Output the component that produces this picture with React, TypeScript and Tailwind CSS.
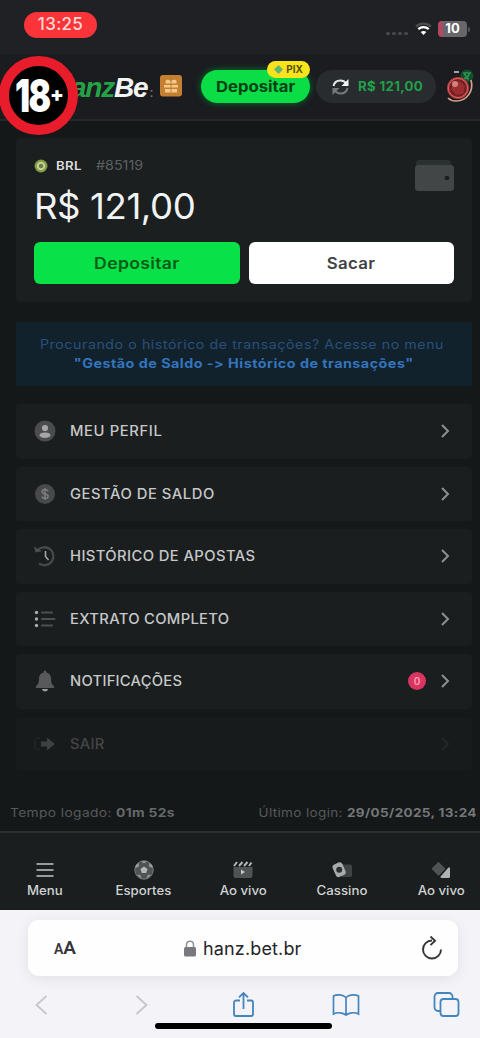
import type { ReactNode } from "react";
import { clsx } from "clsx";

interface MenuItem {
  label: string;
  icon: ReactNode;
  badge?: number;
  faded?: boolean;
  tracking: string;
}

const MENU_ITEMS: MenuItem[] = [
  { label: "MEU PERFIL", icon: <ProfileIcon />, tracking: "tracking-[0.58px]" },
  { label: "GESTÃO DE SALDO", icon: <CoinIcon />, tracking: "tracking-[0.5px]" },
  { label: "HISTÓRICO DE APOSTAS", icon: <HistoryIcon />, tracking: "tracking-[0.38px]" },
  { label: "EXTRATO COMPLETO", icon: <ListIcon />, tracking: "tracking-[0.3px]" },
  { label: "NOTIFICAÇÕES", icon: <BellIcon />, badge: 0, tracking: "tracking-[0.22px]" },
  { label: "SAIR", icon: <ExitIcon />, faded: true, tracking: "tracking-[0.25px]" },
];

const NAV_ITEMS = [
  { label: "Menu", icon: <HamburgerIcon /> },
  { label: "Esportes", icon: <BallIcon /> },
  { label: "Ao vivo", icon: <ClapperIcon /> },
  { label: "Cassino", icon: <CardsIcon /> },
  { label: "Ao vivo", icon: <DiceIcon /> },
];

function ProfileIcon() {
  return (
    <svg width="22" height="22" viewBox="0 0 22 22">
      <circle cx="11" cy="11" r="10.5" fill="#4b4c4e" />
      <circle cx="11" cy="8" r="3.1" fill="#a5a6a7" />
      <path d="M5.5 16c0-2.4 2-3.4 5.5-3.4s5.500 1 5.500 3.400c-1.500 1.300-3.300 1.900-5.500 1.900s-4-.6-5.500-1.900z" fill="#a5a6a7" />
    </svg>
  );
}

function CoinIcon() {
  return (
    <svg width="22" height="22" viewBox="0 0 22 22">
      <circle cx="11" cy="11" r="10" fill="#48494b" />
      <path
        d="M14 8.200c-.4-1.100-1.500-1.600-3-1.600-1.700 0-2.900.8-2.900 2.100 0 3 6 1.400 6 4.500 0 1.400-1.300 2.200-3.100 2.200-1.600 0-2.800-.7-3.200-1.800M11 5v12"
        fill="none"
        stroke="#7d7e7f"
        strokeWidth="1.500"
      />
    </svg>
  );
}

function HistoryIcon() {
  return (
    <svg width="22" height="22" viewBox="0 0 22 22" fill="none">
      <path d="M3.500 5.500A9 9 0 1 1 5 18.400" stroke="#47494b" strokeWidth="2.300" />
      <path d="M0 1.500l1.500 6 6.300-1.200z" fill="#4c4e4f" />
      <path d="M11.500 6v5.500l3 3.500" stroke="#a3a4a5" strokeWidth="1.600" />
    </svg>
  );
}

function ListIcon() {
  return (
    <svg width="22" height="22" viewBox="0 0 22 22" strokeLinecap="round">
      <g fill="#aaabac">
        <circle cx="2.500" cy="4.500" r="1.700" />
        <circle cx="2.500" cy="11" r="1.700" />
        <circle cx="2.500" cy="17.500" r="1.700" />
      </g>
      <path d="M8 4.500h10M8 11h12.500M8 17.500h10" stroke="#4d4f50" strokeWidth="2.200" />
    </svg>
  );
}

function BellIcon() {
  return (
    <svg width="22" height="22" viewBox="0 0 22 22">
      <path
        d="M11 .5c.8 0 1.300.6 1.300 1.400v.6c3 .6 4.700 3 4.700 6 0 4.500 1.200 6 3 7.700.6.700.2 1.800-.8 1.800H2.800c-1 0-1.400-1.100-.8-1.800C3.800 14.500 5 13 5 8.500c0-3 1.700-5.400 4.700-6v-.6C9.700 1.100 10.200.5 11 .5z"
        fill="#58595b"
      />
      <path d="M8 19h6c-.2 1.500-1.400 2.400-3 2.400S8.200 20.500 8 19z" fill="#9b9c9d" />
    </svg>
  );
}

function ExitIcon() {
  return (
    <svg width="22" height="22" viewBox="0 0 22 22">
      <path d="M6 5H3.500C2 5 1 6 1 7.500v6.500C1 15.500 2 16.500 3.500 16.500H6" fill="none" stroke="#202324" strokeWidth="2" />
      <path d="M7 8.500h6V4.500l8 6.500-8 6.500v-4H7z" fill="#3e4041" />
    </svg>
  );
}

function HamburgerIcon() {
  return (
    <svg width="18" height="20" viewBox="0 0 18 20" stroke="#c3c5c5" strokeWidth="1.700">
      <path d="M.5 4h17M.5 10h17M.5 16h17" />
    </svg>
  );
}

function BallIcon() {
  return (
    <svg width="20" height="20" viewBox="0 0 20 20">
      <circle cx="10" cy="10" r="9.200" fill="#505354" stroke="#777a7b" strokeWidth="1" />
      <path d="M10 6.500l3.500 2.500-1.300 4H7.800l-1.300-4z" fill="#b5b7b7" />
      <path
        d="M7 1.300h6L10 3.600zM1 8l1-3 3-2-.3 3.800zM19 8l-1-3-3-2 .3 3.800zM2.700 14.800l3.600.2 1.400 3.700zM17.300 14.800l-3.600.2-1.400 3.700z"
        fill="#9a9c9d"
      />
    </svg>
  );
}

function ClapperIcon() {
  return (
    <svg width="20" height="20" viewBox="0 0 20 20">
      <path d="M.5 7h19v9a2 2 0 0 1-2 2h-15a2 2 0 0 1-2-2z" fill="#505354" />
      <path d="M1 6l3-4M6 6l3.500-4M11 6l3.500-4M16 6l2.500-3.500" stroke="#b4b6b6" strokeWidth="2" />
      <path d="M8 9.500v5l4-2.500z" fill="#c4c5c5" />
    </svg>
  );
}

function CardsIcon() {
  return (
    <svg width="22" height="20" viewBox="0 0 22 20">
      <rect x="10" y="4.500" width="11" height="12.500" rx="1.500" fill="#404344" />
      <rect x="3" y="3" width="10.500" height="13.500" rx="3" transform="rotate(-24 8 10)" fill="#aaacac" />
      <circle cx="8.200" cy="9.800" r="3" fill="#2c3030" />
    </svg>
  );
}

function DiceIcon() {
  return (
    <svg width="20" height="20" viewBox="0 0 20 20">
      <rect x="2.500" y="3.800" width="10" height="10" rx="1" transform="rotate(45 7.500 8.800)" fill="#505354" />
      <path d="M19 8v8.500a1.500 1.500 0 0 1-1.500 1.500H11c-2 0-2-1.500-.5-2.500l6.500-7.500c1-1.200 2-1 2 0z" fill="#b0b2b2" />
    </svg>
  );
}

function StatusBar() {
  return (
    <div className="flex h-[54px] items-start justify-between bg-[#202124] pr-[10px] pl-6">
      <div className="mt-3 flex h-[26px] w-[73px] items-center justify-center rounded-full bg-[#fb3439] text-[17px] font-medium tracking-[0.3px] text-[#ffd9d5]">
        13:25
      </div>
      <div className="mt-[21px] flex items-center">
        <div className="mt-2 mr-[7px] flex gap-[2px]">
          <span className="h-[3px] w-1 rounded-full bg-[#48494c]" />
          <span className="h-[3px] w-1 rounded-full bg-[#48494c]" />
          <span className="h-[3px] w-1 rounded-full bg-[#48494c]" />
          <span className="h-[3px] w-1 rounded-full bg-[#48494c]" />
        </div>
        <svg width="17" height="14" viewBox="0 0 17 14" fill="none" className="mr-[6px]">
          <path d="M1 4.600c4.300-4 10.700-4 15 0" stroke="#4b4c4f" strokeWidth="2.200" />
          <path d="M3.300 7.200c3-2.700 7.400-2.700 10.400 0" stroke="#fff" strokeWidth="2.300" />
          <path d="M5.700 10c1.700-1.400 3.900-1.400 5.600 0L8.500 13z" fill="#fff" />
        </svg>
        <div className="flex h-4 w-[29px] items-center justify-center rounded-[4px] bg-[linear-gradient(90deg,#b04a60_0_18%,#67666a_18%)] text-[13px] font-bold text-white">
          10
        </div>
        <span className="ml-px h-[5px] w-[2px] rounded-r-full bg-[#55565a]" />
      </div>
    </div>
  );
}

function Header() {
  return (
    <header className="relative flex h-[67px] items-center border-b-2 border-[#25282a] bg-[#1a1c1f] pb-px pl-[71px]">
      <div className="flex w-[81px] items-baseline pt-[3px] font-['Liberation_Sans'] text-[28px] leading-none font-bold tracking-[-1.200px] italic">
        <span className="text-[#25a247]">anz</span>
        <span className="text-[#f2f3f3]">Be</span>
        <span className="ml-[2px] text-[12px] text-[#6d6f70] not-italic">:</span>
      </div>
      <svg width="22" height="22" viewBox="0 0 22 22" className="ml-[8px]">
        <rect width="22" height="21.500" rx="3" fill="#c57f30" />
        <path d="M5.500 6.500c0-2.500 4-2.500 5.500 0 1.500-2.500 5.500-2.500 5.500 0v2h-11zM4 10h14v2.500H4zM5 14h12v3.500H5z" fill="#f3c98c" />
        <path d="M11 6v11.500" stroke="#c57f30" strokeWidth="1" />
      </svg>
      <button className="relative ml-[19px] h-[33px] w-[109px] rounded-full bg-[#0bdd47] text-[15px] font-bold text-[#064116] shadow-[0_0_7px_#08752c]">
        <span className="mt-[2px] inline-block scale-x-[1.11]">Depositar</span>
        <span className="absolute -top-[9px] right-0 flex h-[17px] w-[43px] items-center justify-center gap-[3px] rounded-full bg-[#f8e41e] text-[10px] font-bold text-[#5a5308]">
          <svg width="9" height="9" viewBox="0 0 10 10">
            <path d="M5 0l5 5-5 5-5-5z" fill="#63b66c" />
          </svg>
          PIX
        </span>
      </button>
      <div className="ml-[6px] flex h-[33px] w-[120px] items-center rounded-full bg-[#282c2e] pl-[16px]">
        <svg width="17" height="16" viewBox="0 0 17 16" fill="none" className="mt-[2px]">
          <path d="M1.500 7C2.200 3.500 5 1.500 8.500 1.500c2.500 0 4.300 1 5.700 3" stroke="#e6e7e7" strokeWidth="2" />
          <path d="M16.500 0v7h-7z" fill="#f5f5f5" />
          <path d="M15.500 9c-.7 3.500-3.500 5.500-7 5.500-2.500 0-4.300-1-5.700-3" stroke="#77797b" strokeWidth="2" />
          <path d="M.5 16V9h7z" fill="#77797b" />
        </svg>
        <span className="mt-[2px] ml-[9px] inline-block origin-left scale-x-[1.06] text-[12.500px] font-bold tracking-[0.300px] whitespace-nowrap text-[#21a04a]">
          R$ 121,00
        </span>
      </div>
      <svg width="31" height="36" viewBox="0 0 31 36" className="ml-[8px] shrink-0">
        <circle cx="23" cy="8" r="6.500" fill="#124d2d" />
        <path d="M20 5h6l-3 5zM20 10l5 1" stroke="#309353" strokeWidth="1.500" fill="none" />
        <path d="M27 12c3 11-4 21-15 21-3 0-6-1-8-3" fill="none" stroke="#d8a18c" strokeWidth="1.700" />
        <circle cx="14" cy="20" r="11" fill="#ad3b3d" />
        <circle cx="14" cy="20" r="9.500" fill="#741f23" stroke="#e56965" strokeWidth="1" />
        <path d="M9 14l6-1 6 5-2 8-7 1-5-6z" fill="#9c2d31" />
        <circle cx="11" cy="16" r="3" fill="#d0847e" />
        <path d="M10 4h5" stroke="#d1d2d1" strokeWidth="1.500" />
      </svg>
      <AgeBadge />
    </header>
  );
}

/** 18+ seal laid over the logo */
function AgeBadge() {
  return (
    <div className="absolute top-[2px] -left-px flex h-[79px] w-[79px] items-center rounded-full border-[10px] border-[#e81c2b] bg-black pl-[6px] leading-none font-black text-white">
      <span className="w-[34px] shrink-0">
        <span className="inline-block origin-left scale-x-[0.74] text-[45px] leading-[45px] tracking-[-2px]">18</span>
      </span>
      <span className="-mt-[3px] ml-px text-[20px]">+</span>
    </div>
  );
}

function BalanceCard() {
  return (
    <section className="relative h-[164px] rounded-[4px] bg-[#1b1f20] px-[18px] pt-[19px]">
      <div className="flex h-[18px] items-center text-[12px] font-semibold">
        <svg width="14" height="14" viewBox="0 0 14 14">
          <circle cx="7" cy="7" r="6.500" fill="#7f9a42" />
          <circle cx="7" cy="7" r="4.300" fill="#c8cf91" />
          <circle cx="7" cy="7" r="2.200" fill="#6f7e4d" />
        </svg>
        <span className="ml-2 inline-block origin-left scale-x-110 tracking-[0.300px] text-[#dcdedf]">BRL</span>
        <span className="ml-[17px] inline-block origin-left scale-x-110 text-[13px] font-normal text-[#5d6061]">#85119</span>
      </div>
      <p className="mt-[8px] w-fit origin-left scale-x-[1.045] text-[35px] leading-[46px] tracking-[-0.400px] text-[#f1f3f4]">
        R$ 121,00
      </p>
      <div className="mt-[13px] flex gap-[9px]">
        <button className="h-[42px] flex-1 rounded-[6px] bg-[#08e147] text-[16px] font-semibold tracking-[0.300px] text-[#075b18]">
          <span className="inline-block scale-x-110">Depositar</span>
        </button>
        <button className="h-[42px] flex-1 rounded-[6px] bg-white text-[16px] font-semibold tracking-[0.300px] text-[#404144]">
          <span className="inline-block scale-x-[1.05]">Sacar</span>
        </button>
      </div>
      <svg width="39" height="32" viewBox="0 0 39 32" className="absolute top-[21px] right-[18px]">
        <path d="M4 1h28a4 4 0 0 1 4 4v4H1V4a3 3 0 0 1 3-3z" fill="#2b3031" />
        <rect y="6" width="39" height="26" rx="3.500" fill="#424647" />
        <circle cx="32" cy="19" r="2.300" fill="#1b1f20" />
      </svg>
    </section>
  );
}

function MenuRow({ item }: { item: MenuItem }) {
  return (
    <div
      className={clsx(
        "flex h-[54.500px] items-center rounded-[4px] pr-[21px] pl-[18px]",
        item.faded ? "bg-[#181b1c]" : "bg-[#1b1e1f]"
      )}
    >
      {item.icon}
      <span
        className={clsx(
          "-mt-px ml-[14px] inline-block origin-left scale-x-[1.055] text-[14px] font-medium",
          item.tracking,
          item.faded ? "text-[#444647]" : "text-[#c6c8c9]"
        )}
      >
        {item.label}
      </span>
      <div className="ml-auto flex items-center">
        {item.badge !== undefined && (
          <span className="mr-[13px] flex size-[18px] items-center justify-center rounded-full bg-[#d93560] text-[10px] font-semibold text-[#ff9db6]">
            {item.badge}
          </span>
        )}
        <svg width="12" height="16" viewBox="0 0 12 16" fill="none" stroke={item.faded ? "#25292a" : "#8d8f90"} strokeWidth="2">
          <path d="M3 2l6 6-6 6" />
        </svg>
      </div>
    </div>
  );
}

function BottomNav() {
  return (
    <nav className="h-[79px] overflow-hidden border-t-2 border-[#2b3031] bg-[#1a1e1f]">
      <div className="-ml-[5px] flex w-[496px] pt-[27px]">
        {NAV_ITEMS.map((item, idx) => (
          <div key={idx} className="flex flex-1 flex-col items-center">
            {item.icon}
            <span className="mt-[2px] inline-block scale-x-[1.06] text-[12.500px] leading-[18px] font-medium text-[#d0d2d2]">
              {item.label}
            </span>
          </div>
        ))}
      </div>
    </nav>
  );
}

function BrowserBar() {
  return (
    <footer className="relative h-[128px] bg-[#f4f3f7] pt-[10px] pl-7">
      <div className="flex h-14 w-[430px] items-center rounded-[11px] bg-[#fefeff] pr-[15px] pl-[26px] shadow-[0_3px_14px_rgba(0,0,0,0.08)]">
        <span className="flex w-[22px] items-baseline font-['Roboto'] font-semibold text-[#353438]">
          <span className="text-[14px]">A</span>
          <span className="text-[19px]">A</span>
        </span>
        <div className="ml-[108px] flex items-center">
          <svg width="12" height="17" viewBox="0 0 12 17">
            <path d="M2.500 8V5C2.500 0 9.500 0 9.500 5v3" fill="none" stroke="#929194" strokeWidth="1.500" />
            <rect y="7" width="12" height="9.500" rx="1.500" fill="#79787c" />
          </svg>
          <span className="ml-[7px] text-[18px] tracking-[0.150px] text-[#252427]">hanz.bet.br</span>
        </div>
        <svg width="22" height="24" viewBox="0 0 22 24" fill="none" stroke="#353438" strokeWidth="1.900" className="ml-auto">
          <path d="M11 4.500a9 9 0 1 0 9 9" />
          <path d="M9.500 0.500l4.500 4.200-4.500 4.500" />
        </svg>
      </div>
      <div className="mt-[15px] flex items-center pl-[6px]">
        <svg width="14" height="22" viewBox="0 0 14 22" fill="none" stroke="#c8c6ca" strokeWidth="1.800" className="shrink-0">
          <path d="M12.500 2L2.500 11l10 9" />
        </svg>
        <svg width="14" height="22" viewBox="0 0 14 22" fill="none" stroke="#c8c6ca" strokeWidth="1.800" className="ml-[87px] shrink-0">
          <path d="M1.500 2l10 9-10 9" />
        </svg>
        <svg width="24" height="27" viewBox="0 0 24 27" fill="none" stroke="#4385bd" strokeWidth="1.800" className="ml-[83px] shrink-0">
          <path d="M8 9.500H4a2 2 0 0 0-2 2V23a2 2 0 0 0 2 2h15a2 2 0 0 0 2-2V11.500a2 2 0 0 0-2-2h-4M11.500 18V2M7 6.300L11.500 2 16 6.300" />
        </svg>
        <svg width="28" height="24" viewBox="0 0 28 24" fill="none" stroke="#4385bd" strokeWidth="1.700" className="ml-[76px] shrink-0">
          <path d="M14 4.500C11 1.500 5 1 1.500 3v18c4-2 9.500-1.500 12.500 1 3-2.500 8.500-3 12.500-1V3C23 1 17 1.500 14 4.500zM14 4.500V22" />
        </svg>
        <svg width="27" height="26" viewBox="0 0 27 26" fill="none" stroke="#4385bd" strokeWidth="1.800" className="ml-[73px] shrink-0">
          <path d="M7.500 19H5a3.500 3.500 0 0 1-3.500-3.500v-11A3.500 3.500 0 0 1 5 1h11a3.500 3.500 0 0 1 3.500 3.500V7" />
          <rect x="7.500" y="7" width="18" height="17" rx="3" />
        </svg>
      </div>
      <div className="absolute bottom-[9px] left-[155px] h-[6px] w-[177px] rounded-full bg-black" />
    </footer>
  );
}

export default function App() {
  return (
    <div className="h-[1038px] w-[480px] overflow-hidden bg-[#151819] font-['Inter',sans-serif]">
      <StatusBar />
      <Header />
      <main className="h-[710px] pt-[17px]">
        <div className="pr-2 pl-4">
          <BalanceCard />
          <p className="mt-5 flex h-16 flex-col items-center justify-center bg-[#11222c] text-[12.500px] leading-[19px] whitespace-nowrap">
            <span className="-ml-1 inline-block scale-x-[1.135] tracking-[0.500px] text-[#2b4f7b]">
              Procurando o histórico de transações? Acesse no menu
            </span>
            <span className="inline-block scale-x-[1.15] font-bold tracking-[0.400px] text-[#3474bd]">
              "Gestão de Saldo -&gt; Histórico de transações"
            </span>
          </p>
          <div className="mt-[18px] flex flex-col gap-2">
            {MENU_ITEMS.map((item) => (
              <MenuRow key={item.label} item={item} />
            ))}
          </div>
        </div>
        <div className="mt-[32px] flex justify-between pr-[3px] pl-[10px] text-[11.500px] leading-[20px] tracking-[0.300px] whitespace-nowrap text-[#56595a]">
          <span className="inline-block origin-left scale-x-[1.2]">
            Tempo logado: <b className="text-[#66696a]">01m 52s</b>
          </span>
          <span className="inline-block origin-right scale-x-[1.175]">
            Último login: <b className="text-[#747778]">29/05/2025, 13:24</b>
          </span>
        </div>
      </main>
      <BottomNav />
      <BrowserBar />
    </div>
  );
}
